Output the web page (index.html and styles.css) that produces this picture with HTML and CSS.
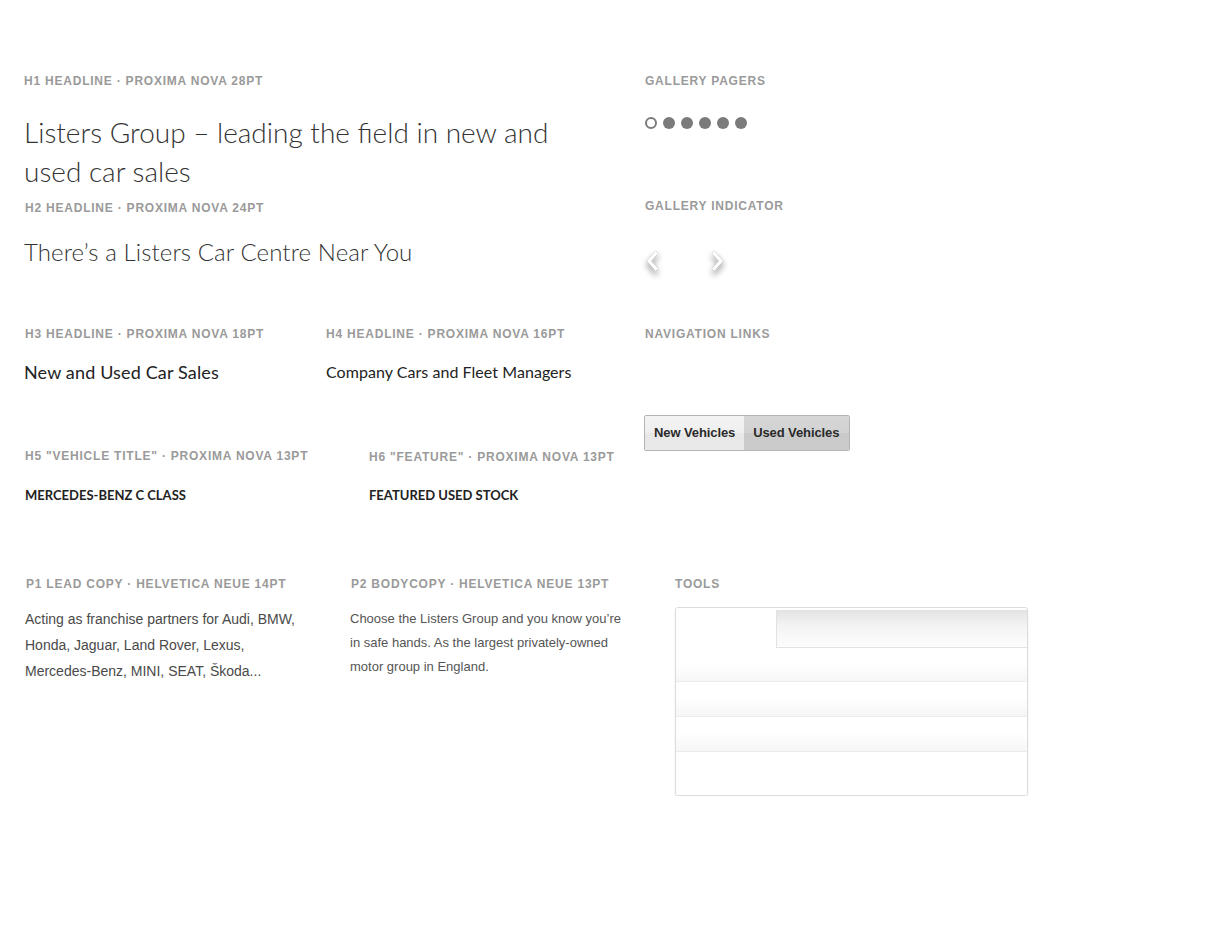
FILE: index.html
```html
<!DOCTYPE html>
<html lang="en">
<head>
<meta charset="utf-8">
<title>Listers Group – Style Guide</title>
<link rel="stylesheet" href="styles.css">
</head>
<body>
<div class="page">
  <div class="top">
    <div class="left">
      <div class="block h1-block">
        <div class="label">H1 Headline · Proxima Nova 28pt</div>
        <h1 class="h1">Listers Group – leading the field in new and used car sales</h1>
      </div>
      <div class="block h2-block">
        <div class="label">H2 Headline · Proxima Nova 24pt</div>
        <h2 class="h2">There’s a Listers Car Centre Near You</h2>
      </div>
      <div class="row h34-row">
        <div class="block col-h3">
          <div class="label">H3 Headline · Proxima Nova 18pt</div>
          <h3 class="h3">New and Used Car Sales</h3>
        </div>
        <div class="block col-h4">
          <div class="label">H4 Headline · Proxima Nova 16pt</div>
          <h4 class="h4">Company Cars and Fleet Managers</h4>
        </div>
      </div>
      <div class="row h56-row">
        <div class="block col-h5">
          <div class="label">H5 "Vehicle Title" · Proxima Nova 13pt</div>
          <h5 class="h5">Mercedes-Benz C Class</h5>
        </div>
        <div class="block col-h6">
          <div class="label">H6 "Feature" · Proxima Nova 13pt</div>
          <h6 class="h6">Featured Used Stock</h6>
        </div>
      </div>
    </div>
    <div class="right">
      <div class="block pagers-block">
        <div class="label">Gallery Pagers</div>
        <div class="pagers">
          <span class="dot active"></span>
          <span class="dot"></span>
          <span class="dot"></span>
          <span class="dot"></span>
          <span class="dot"></span>
          <span class="dot"></span>
        </div>
      </div>
      <div class="block indicator-block">
        <div class="label">Gallery Indicator</div>
        <div class="arrows">
          <svg class="arrow" width="18" height="26" viewBox="0 0 18 26"><polyline points="13,3 5,12 13,21" fill="none" stroke="#fff" stroke-width="3.5" stroke-linejoin="miter"/></svg>
          <svg class="arrow" width="18" height="26" viewBox="0 0 18 26"><polyline points="5,3 13,12 5,21" fill="none" stroke="#fff" stroke-width="3.5" stroke-linejoin="miter"/></svg>
        </div>
      </div>
      <div class="block nav-block">
        <div class="label">Navigation Links</div>
        <div class="navlinks">
          <a class="navlink">New Vehicles</a>
          <a class="navlink selected">Used Vehicles</a>
        </div>
      </div>
    </div>
  </div>
  <div class="bottom">
    <div class="block col-p1">
      <div class="label">P1 Lead Copy · Helvetica Neue 14pt</div>
      <p class="p1">Acting as franchise partners for Audi, BMW, Honda, Jaguar, Land Rover, Lexus, Mercedes-Benz, MINI, SEAT, Škoda...</p>
    </div>
    <div class="block col-p2">
      <div class="label">P2 Bodycopy · Helvetica Neue 13pt</div>
      <p class="p2">Choose the Listers Group and you know you’re in safe hands. As the largest privately-owned motor group in England.</p>
    </div>
    <div class="block col-tools">
      <div class="label">Tools</div>
      <div class="tools">
        <div class="tools-head">
          <div class="tools-tab"></div>
          <div class="tools-tab-rest"></div>
        </div>
        <div class="tools-row r1"></div>
        <div class="tools-row r2"></div>
        <div class="tools-row r3"></div>
        <div class="tools-row last"></div>
      </div>
    </div>
  </div>
</div>
</body>
</html>
```
FILE: styles.css
```css
* { box-sizing: border-box; }
html, body { margin: 0; padding: 0; background: #fff; }
body { font-family: "Liberation Sans", Arial, sans-serif; color: #333; }

.page { padding: 73px 0 0 24px; width: 1225px; }

.label {
  font-family: "Liberation Sans", Arial, sans-serif;
  font-weight: bold;
  font-size: 12px;
  line-height: 16px;
  letter-spacing: 0.78px;
  text-transform: uppercase;
  color: #9a9a9a;
  white-space: nowrap;
}

h1, h2, h3, h4, h5, h6, p { margin: 0; font-weight: normal; }

.top { display: flex; }
.left { width: 621px; }
.right { display: flex; flex-direction: column; }

.h1 {
  font-family: Lato, "Open Sans", sans-serif;
  font-weight: 300;
  font-size: 28px;
  line-height: 39px;
  color: #333;
  margin-top: 24px;
  width: 560px;
}
.h2-block { margin-top: 9px; }
.h2-block .label { padding-left: 1px; }
.h2 {
  font-family: Lato, "Open Sans", sans-serif;
  font-weight: 300;
  font-size: 24px;
  line-height: 32px;
  color: #333;
  margin-top: 20px;
  letter-spacing: 0.1px;
}

.row { display: flex; }
.h34-row { margin-top: 58px; }
.col-h3 { width: 302px; }
.col-h3 .label { padding-left: 1px; }
.h3 {
  font-family: Lato, "Open Sans", sans-serif;
  font-weight: 400;
  font-size: 18px;
  line-height: 24px;
  color: #222;
  margin-top: 18px;
  letter-spacing: 0.15px;
}
.h4 {
  font-family: Lato, "Open Sans", sans-serif;
  font-weight: 400;
  font-size: 16px;
  line-height: 24px;
  color: #222;
  margin-top: 18px;
  letter-spacing: 0.05px;
}

.h56-row { margin-top: 64px; }
.col-h5 { width: 345px; padding-left: 1px; }
.col-h6 { padding-top: 1px; }
.h5, .h6 {
  font-family: Lato, "Open Sans", sans-serif;
  font-weight: 700;
  font-size: 13px;
  line-height: 16px;
  text-transform: uppercase;
  color: #222;
  margin-top: 23px;
}
.col-h6 .h6 { margin-top: 22px; }

/* right column */
.pagers-block { margin-top: 0; }
.pagers { display: flex; gap: 6px; margin-top: 28px; padding-left: 0; }
.dot {
  width: 12px; height: 12px; border-radius: 50%;
  background: #7b7b7b;
}
.dot.active { background: #fff; border: 2px solid #7b7b7b; }

.indicator-block { margin-top: 69px; }
.arrows { display: flex; gap: 46px; margin-top: 35px; margin-left: -1px; }
.arrow { filter: drop-shadow(0 0 0.7px rgba(0,0,0,0.55)) drop-shadow(0 4px 3px rgba(0,0,0,0.45)); }

.nav-block { margin-top: 51px; }
.navlinks {
  display: flex;
  margin-top: 73px;
  margin-left: -1px;
  width: 206px;
  border: 1px solid #b4b4b4;
  border-radius: 2px;
  overflow: hidden;
}
.navlink {
  font-family: "Liberation Sans", Arial, sans-serif;
  font-weight: bold;
  font-size: 13px;
  line-height: 34px;
  color: #2a2a2a;
  padding: 0 9px;
  letter-spacing: -0.1px;
  background: linear-gradient(#f3f3f3 0%, #efefef 50%, #e8e8e8 51%, #e9e9e9 100%);
  text-decoration: none;
}
.navlink.selected {
  flex: 1;
  background: linear-gradient(#d6d6d6 0%, #d2d2d2 50%, #cacaca 51%, #cbcbcb 100%);
}

/* bottom row */
.bottom { display: flex; margin-top: 73px; }
.col-p1 { width: 326px; padding-left: 1px; }
.col-p1 .label { padding-left: 1px; }
.col-p2 { width: 325px; }
.col-p2 .label { padding-left: 1px; }
.p1 {
  font-family: "Liberation Sans", Arial, sans-serif;
  font-size: 14px;
  line-height: 26px;
  color: #4a4a4a;
  margin-top: 14px;
  width: 278px;
}
.p2 {
  font-family: "Liberation Sans", Arial, sans-serif;
  font-size: 13px;
  line-height: 24px;
  color: #555;
  margin-top: 15px;
  width: 280px;
}

.tools {
  margin-top: 15px;
  width: 353px;
  border: 1px solid #dcdcdc;
  border-radius: 3px;
  box-shadow: 0 1px 2px rgba(0,0,0,0.08);
  overflow: hidden;
  background: #fff;
}
.tools-head { display: flex; height: 40px; }
.tools-tab { width: 100px; background: #fff; }
.tools-tab-rest {
  flex: 1;
  margin-top: 2px;
  background: linear-gradient(#e3e3e3 0%, #f4f4f4 45%, #fdfdfd 100%);
  border-left: 1px solid #e2e2e2;
  border-bottom: 1px solid #e2e2e2;
}
.tools-row {
  height: 35px;
  border-bottom: 1px solid #ececec;
  background: linear-gradient(#fff 0%, #fff 45%, #f6f6f6 100%);
}
.tools-row.r1 { height: 34px; }
.tools-row.last { height: 43px; border-bottom: 0; background: #fff; }
```
